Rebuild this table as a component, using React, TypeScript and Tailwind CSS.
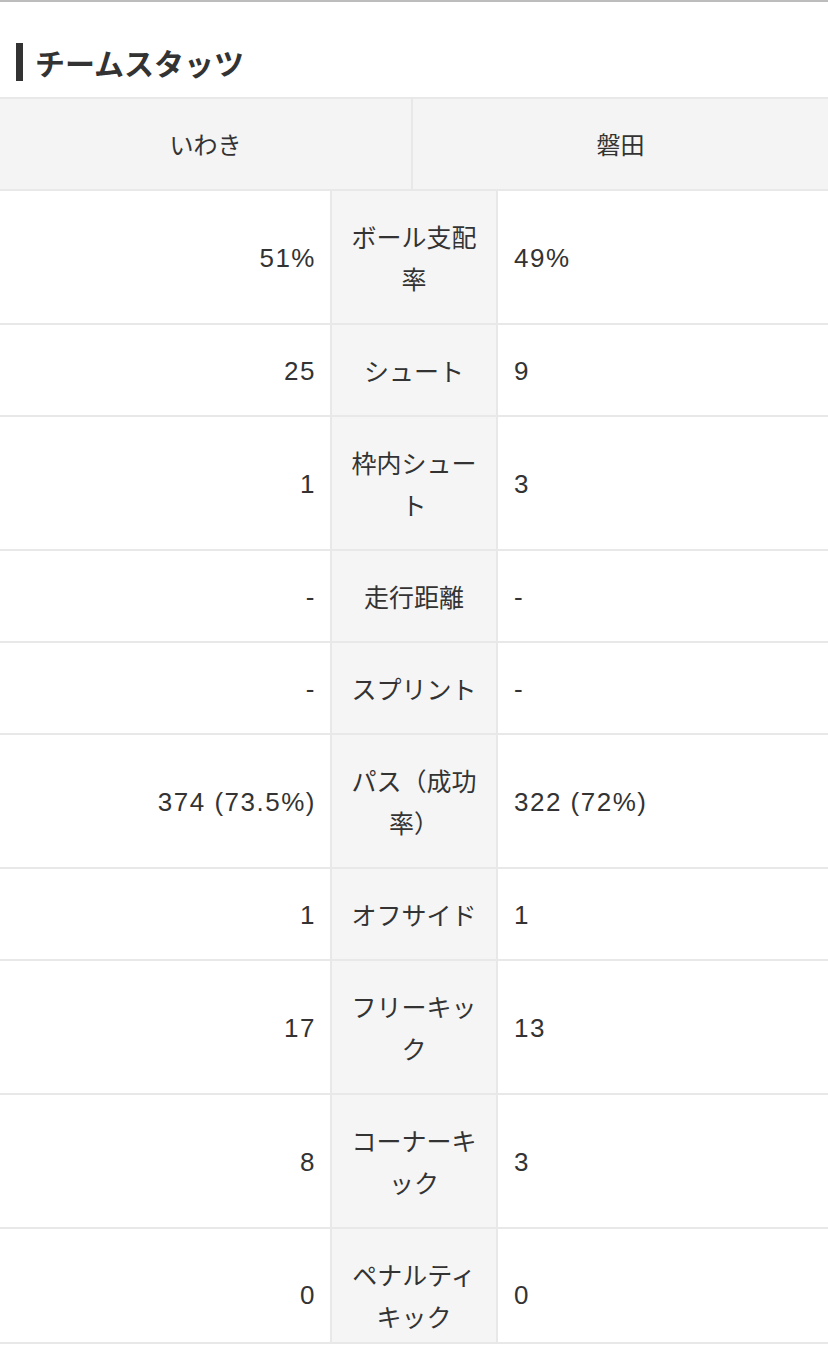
import React from 'react';

type Stat = { home: string; label: string[]; away: string };

const stats: Stat[] = [
  { home: '51%', label: ['ボール支配', '率'], away: '49%' },
  { home: '25', label: ['シュート'], away: '9' },
  { home: '1', label: ['枠内シュー', 'ト'], away: '3' },
  { home: '-', label: ['走行距離'], away: '-' },
  { home: '-', label: ['スプリント'], away: '-' },
  { home: '374 (73.5%)', label: ['パス（成功', '率）'], away: '322 (72%)' },
  { home: '1', label: ['オフサイド'], away: '1' },
  { home: '17', label: ['フリーキッ', 'ク'], away: '13' },
  { home: '8', label: ['コーナーキ', 'ック'], away: '3' },
  { home: '0', label: ['ペナルティ', 'キック'], away: '0' },
];

const num = { fontFamily: '"Liberation Sans", "Noto Sans CJK JP", sans-serif' };

const StatRow: React.FC<{ s: Stat; last?: boolean }> = ({ s, last }) => {
  const pad = last ? 'pt-6 pb-[5px]' : 'py-6';
  const vpad = last ? 'pt-6 pb-[5px]' : 'pt-[25px] pb-[23px]';
  return (
    <div className="grid grid-cols-[330px_168px_1fr] border-b-2 border-[#e8e8e8]">
      <div className={`flex items-center justify-end pr-[14px] text-[26px] tracking-[1.5px] ${vpad}`} style={num}>{s.home}</div>
      <div className={`flex flex-col items-center justify-center bg-[#f5f5f5] border-x-2 border-[#e8e8e8] ${pad}`}>
        {s.label.map((l, i) => <span key={i} className="block whitespace-nowrap">{l}</span>)}
      </div>
      <div className={`flex items-center pl-4 text-[26px] tracking-[1.5px] ${vpad}`} style={num}>{s.away}</div>
    </div>
  );
};

export default function App() {
  return (
    <div className="min-h-[1349px] bg-white text-[#333] border-t-2 border-[#bdbdbd] text-[25px] leading-[42px]" style={{ fontFamily: '"Noto Sans CJK JP", "Noto Sans", sans-serif' }}>
      <h2 className="flex items-center mt-[41px] mb-4 pl-4 h-[38px]">
        <span className="w-[7px] h-[38px] bg-[#333] mr-3" />
        <span className="text-[30px] font-bold leading-none">チームスタッツ</span>
      </h2>
      <div className="border-t-2 border-[#e8e8e8]">
        <div className="grid grid-cols-[413px_1fr] bg-[#f4f4f4] border-b-2 border-[#e8e8e8] h-[92px] text-[24px]">
          <div className="flex items-center justify-center border-r-2 border-[#e8e8e8]">いわき</div>
          <div className="flex items-center justify-center">磐田</div>
        </div>
        {stats.map((s, i) => <StatRow key={i} s={s} last={i === stats.length - 1} />)}
      </div>
    </div>
  );
}
